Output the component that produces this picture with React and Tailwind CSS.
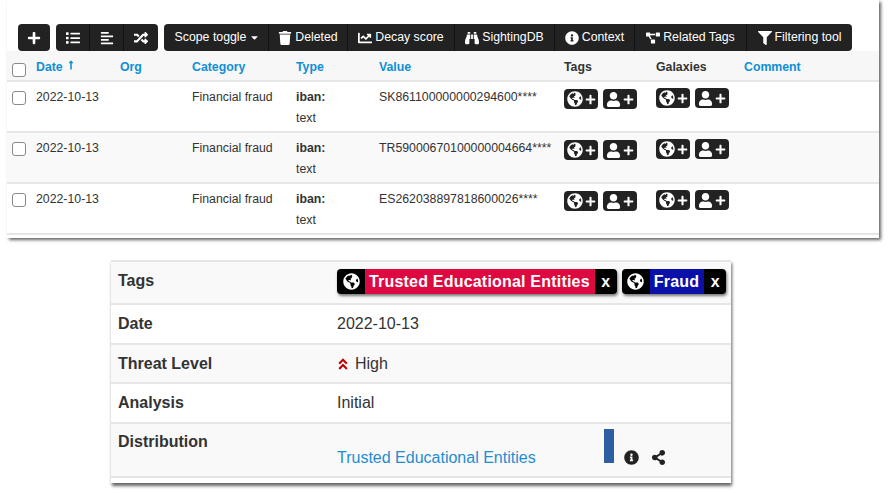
import React from 'react';
import {
  FaPlus, FaList, FaAlignLeft, FaRandom, FaCaretDown, FaTrash, FaChartLine, FaBinoculars,
  FaInfoCircle, FaProjectDiagram, FaFilter, FaGlobeAmericas, FaUser, FaAngleDoubleUp, FaShareAlt,
  FaLongArrowAltUp,
} from 'react-icons/fa';

const rows = [
  { value: 'SK861100000000294600****', tone: 'bg-white' },
  { value: 'TR59000670100000004664****', tone: 'bg-[#f9f9f9]' },
  { value: 'ES262038897818600026****', tone: 'bg-white' },
];

const toolbarBtn = 'h-full flex items-center justify-center gap-[3px] border-r border-[#111] last:border-r-0';
const cols = 'grid grid-cols-[29px_84px_72px_104px_83px_185px_92px_88px_1fr]';

const ToolButton = ({ icon: Icon, label, width }) => (
  <div className={`${toolbarBtn} ${width}`}>
    <Icon className="text-white text-[14px]" />
    <span>{label}</span>
  </div>
);

const TagButtons = () => (
  <div className="flex gap-[5px]">
    <div className="w-[34px] h-[20px] rounded-[4px] bg-[#222] flex items-center justify-center gap-[2px] text-white">
      <FaGlobeAmericas className="text-[16px]" />
      <FaPlus className="text-[11px]" />
    </div>
    <div className="w-[34px] h-[20px] rounded-[4px] bg-[#222] flex items-center justify-center gap-[2px] text-white">
      <FaUser className="text-[15px]" />
      <FaPlus className="text-[11px]" />
    </div>
  </div>
);

const Checkbox = () => (
  <span className="block w-[14px] h-[14px] rounded-[3px] border border-[#8a8a8a] bg-white" />
);

const Tag = ({ label, color }) => (
  <div className="flex h-[25px] rounded-[4px] overflow-hidden bg-black text-white font-bold tracking-[0.2px] shadow-[1px_2px_3px_#777]">
    <span className="w-[28px] flex items-center justify-center">
      <FaGlobeAmericas className="text-[17px]" />
    </span>
    <span className={`${color} pl-[4px] pr-[5px] flex items-center`}>{label}</span>
    <span className="w-[22px] flex items-center justify-center">x</span>
  </div>
);

const detailRow = 'grid grid-cols-[219px_1fr] border-b-2 border-[#e6e6e6] pl-[7px]';

export default function App() {
  return (
    <div className="w-[889px] h-[493px] bg-white overflow-hidden font-['Liberation_Sans',Arial,sans-serif] text-[#333]">
      {/* attributes table */}
      <div className="ml-[7px] w-[872px] h-[238px] pt-6 bg-white overflow-hidden shadow-[2px_2px_3px_#666]">
        <div className="flex gap-[6px] ml-[11px] h-[27px] text-white text-[12.3px]">
          <div className="w-[32px] rounded-[4px] bg-[#222] flex items-center justify-center">
            <FaPlus className="text-[14px]" />
          </div>
          <div className="flex rounded-[4px] bg-[#222]">
            <div className={`${toolbarBtn} w-[34px]`}><FaList className="text-[14px]" /></div>
            <div className={`${toolbarBtn} w-[34px]`}><FaAlignLeft className="text-[14px]" /></div>
            <div className={`${toolbarBtn} w-[34px]`}><FaRandom className="text-[14px]" /></div>
          </div>
          <div className="flex rounded-[4px] bg-[#222]">
            <div className={`${toolbarBtn} w-[105px] pl-[3px]`}>
              <span>Scope toggle</span>
              <FaCaretDown className="text-[11px]" />
            </div>
            <ToolButton icon={FaTrash} label="Deleted" width="w-[79px]" />
            <ToolButton icon={FaChartLine} label="Decay score" width="w-[107px]" />
            <ToolButton icon={FaBinoculars} label="SightingDB" width="w-[100px]" />
            <ToolButton icon={FaInfoCircle} label="Context" width="w-[80px]" />
            <ToolButton icon={FaProjectDiagram} label="Related Tags" width="w-[112px]" />
            <ToolButton icon={FaFilter} label="Filtering tool" width="w-[105px]" />
          </div>
        </div>

        <div className={`${cols} h-[31px] bg-[#f7f7f7] border-b-2 border-[#e6e6e6] text-[12.3px] font-bold text-[#0f8fd6] pt-[7px]`}>
          <div className="pl-[5px] pt-[5px]"><Checkbox /></div>
          <div className="flex items-start gap-[3px]">Date <FaLongArrowAltUp className="text-[10px] mt-[2px] text-[#0f8fd6]" /></div>
          <div>Org</div>
          <div>Category</div>
          <div>Type</div>
          <div>Value</div>
          <div className="text-[#333]">Tags</div>
          <div className="text-[#333]">Galaxies</div>
          <div>Comment</div>
        </div>

        {rows.map((row) => (
          <div key={row.value} className={`${cols} h-[51px] ${row.tone} border-b-2 border-[#e6e6e6] text-[12.3px] pt-[6px]`}>
            <div className="pl-[5px] pt-[3px]"><Checkbox /></div>
            <div>2022-10-13</div>
            <div />
            <div>Financial fraud</div>
            <div className="leading-[21px] -mt-[1px]">
              <div className="font-bold">iban:</div>
              <div>text</div>
            </div>
            <div>{row.value}</div>
            <div className="pt-[1px]"><TagButtons /></div>
            <div><TagButtons /></div>
            <div />
          </div>
        ))}
      </div>

      {/* event details */}
      <div className="ml-[111px] mt-[22px] w-[620px] h-[223px] bg-white text-[16px] shadow-[1px_3px_3px_#666] border-t-2 border-[#e6e6e6]">
        <div className={`${detailRow} h-[43px] bg-[#f9f9f9]`}>
          <div className="font-bold pt-[7px]">Tags</div>
          <div className="flex gap-[5px] pt-[7px]">
            <Tag label="Trusted Educational Entities" color="bg-[#dc0a40]" />
            <Tag label="Fraud" color="bg-[#0a10a8]" />
          </div>
        </div>
        <div className={`${detailRow} h-[40px] items-center`}>
          <div className="font-bold">Date</div>
          <div>2022-10-13</div>
        </div>
        <div className={`${detailRow} h-[39px] items-center bg-[#f9f9f9]`}>
          <div className="font-bold">Threat Level</div>
          <div className="flex items-center gap-[5px] -ml-[1px]">
            <FaAngleDoubleUp className="text-[#c00000] text-[14px]" />
            <span>High</span>
          </div>
        </div>
        <div className={`${detailRow} h-[40px] items-center`}>
          <div className="font-bold">Analysis</div>
          <div>Initial</div>
        </div>
        <div className={`${detailRow} h-[54px] bg-[#f9f9f9]`}>
          <div className="font-bold pt-[6px]">Distribution</div>
          <div className="flex items-end pt-[5px] pb-[13px]">
            <span className="text-[#1f8dd0] leading-[18px] w-[267px] -mb-[4px]">Trusted Educational Entities</span>
            <span className="w-[10px] h-[34px] bg-[#2f5fa3]" />
            <FaInfoCircle className="ml-[10px] text-[15px] text-[#222] -mb-[2px]" />
            <FaShareAlt className="ml-[12px] text-[15px] text-[#222] -mb-[2px]" />
          </div>
        </div>
      </div>
    </div>
  );
}
